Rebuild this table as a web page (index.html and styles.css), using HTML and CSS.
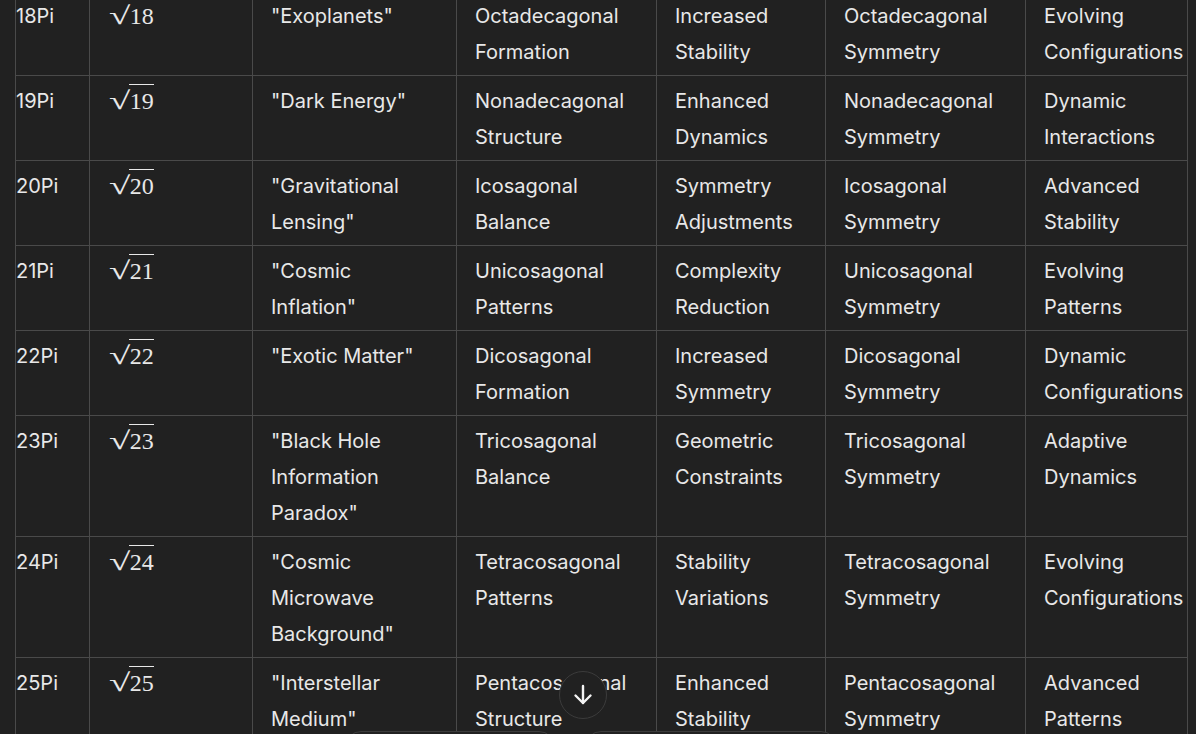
FILE: index.html
```html
<!DOCTYPE html>
<html lang="en">
<head>
    <meta charset="UTF-8">
    <meta name="viewport" content="width=device-width, initial-scale=1.0">
    <title>Pi Table</title>
    <link rel="stylesheet" href="styles.css">
</head>
<body>
    <div class="thread">
        <table class="pi-table">
            <colgroup>
                <col style="width: 74px">
                <col style="width: 163px">
                <col style="width: 204px">
                <col style="width: 200px">
                <col style="width: 169px">
                <col style="width: 200px">
                <col style="width: 162px">
            </colgroup>
            <tbody>
                <tr>
                    <td>18Pi</td>
                    <td><span class="sqrt"><span class="rad">√</span><span class="arg">18</span></span></td>
                    <td>"Exoplanets"</td>
                    <td>Octadecagonal Formation</td>
                    <td>Increased Stability</td>
                    <td>Octadecagonal Symmetry</td>
                    <td>Evolving Configurations</td>
                </tr>
                <tr>
                    <td>19Pi</td>
                    <td><span class="sqrt"><span class="rad">√</span><span class="arg">19</span></span></td>
                    <td>"Dark Energy"</td>
                    <td>Nonadecagonal Structure</td>
                    <td>Enhanced Dynamics</td>
                    <td>Nonadecagonal Symmetry</td>
                    <td>Dynamic Interactions</td>
                </tr>
                <tr>
                    <td>20Pi</td>
                    <td><span class="sqrt"><span class="rad">√</span><span class="arg">20</span></span></td>
                    <td>"Gravitational Lensing"</td>
                    <td>Icosagonal Balance</td>
                    <td>Symmetry Adjustments</td>
                    <td>Icosagonal Symmetry</td>
                    <td>Advanced Stability</td>
                </tr>
                <tr>
                    <td>21Pi</td>
                    <td><span class="sqrt"><span class="rad">√</span><span class="arg">21</span></span></td>
                    <td>"Cosmic Inflation"</td>
                    <td>Unicosagonal Patterns</td>
                    <td>Complexity Reduction</td>
                    <td>Unicosagonal Symmetry</td>
                    <td>Evolving Patterns</td>
                </tr>
                <tr>
                    <td>22Pi</td>
                    <td><span class="sqrt"><span class="rad">√</span><span class="arg">22</span></span></td>
                    <td>"Exotic Matter"</td>
                    <td>Dicosagonal Formation</td>
                    <td>Increased Symmetry</td>
                    <td>Dicosagonal Symmetry</td>
                    <td>Dynamic Configurations</td>
                </tr>
                <tr>
                    <td>23Pi</td>
                    <td><span class="sqrt"><span class="rad">√</span><span class="arg">23</span></span></td>
                    <td>"Black Hole Information Paradox"</td>
                    <td>Tricosagonal Balance</td>
                    <td>Geometric Constraints</td>
                    <td>Tricosagonal Symmetry</td>
                    <td>Adaptive Dynamics</td>
                </tr>
                <tr>
                    <td>24Pi</td>
                    <td><span class="sqrt"><span class="rad">√</span><span class="arg">24</span></span></td>
                    <td>"Cosmic Microwave Background"</td>
                    <td>Tetracosagonal Patterns</td>
                    <td>Stability Variations</td>
                    <td>Tetracosagonal Symmetry</td>
                    <td>Evolving Configurations</td>
                </tr>
                <tr>
                    <td>25Pi</td>
                    <td><span class="sqrt"><span class="rad">√</span><span class="arg">25</span></span></td>
                    <td>"Interstellar Medium"</td>
                    <td>Pentacosagonal Structure</td>
                    <td>Enhanced Stability</td>
                    <td>Pentacosagonal Symmetry</td>
                    <td>Advanced Patterns</td>
                </tr>
            </tbody>
        </table>
    </div>

    <button class="scroll-down" type="button" aria-label="Scroll to bottom">
        <svg width="22" height="22" viewBox="0 0 22 22" fill="none" stroke="currentColor" stroke-width="2.4" stroke-linecap="round" stroke-linejoin="round">
            <path d="M11 2v17"/>
            <path d="M3.5 11.5L11 19l7.5-7.5"/>
        </svg>
    </button>

    <div class="chips">
        <div class="chip chip-left"></div>
        <div class="chip chip-right"></div>
    </div>
</body>
</html>
```

FILE: styles.css
```css
body {
    margin: 0;
    background-color: #212121;
    color: #e8e8e8;
    font-family: Inter, "Noto Sans", sans-serif;
    font-size: 20px;
    line-height: 36px;
    overflow: hidden;
}
.thread {
    margin-top: -10px;
    padding-left: 15px;
    padding-right: 8px;
}
.pi-table {
    table-layout: fixed;
    width: 1173px;
    border-collapse: collapse;
}
.pi-table td {
    border: 1px solid #4a4a4a;
    padding: 7px 18px 5px;
    vertical-align: top;
}
.pi-table td:first-child {
    padding-left: 0;
}
.pi-table td:last-child {
    padding-right: 0;
}
.sqrt {
    font-family: "Liberation Serif", "DejaVu Serif", serif;
    font-size: 24px;
    white-space: nowrap;
}
.rad {
    display: inline-block;
    font-size: 25px;
    margin-left: 1px;
    margin-right: 6px;
    transform: scaleX(1.55);
    transform-origin: 0 0;
}
.arg {
    border-top: 1.5px solid #e8e8e8;
    padding-top: 3px;
    padding-left: 1px;
}
.scroll-down {
    position: fixed;
    left: 559px;
    top: 671px;
    width: 48px;
    height: 48px;
    border-radius: 50%;
    border: 1px solid #3c3c3c;
    background-color: #212121;
    color: #f4f4f4;
    display: flex;
    align-items: center;
    justify-content: center;
    padding: 0;
}
.chips {
    position: fixed;
    left: 345px;
    top: 731px;
    display: flex;
    gap: 30px;
}
.chip {
    height: 40px;
    border: 1px solid #3c3c3c;
    border-radius: 16px;
    background-color: #212121;
}
.chip-left {
    width: 208px;
}
.chip-right {
    width: 250px;
}
```
